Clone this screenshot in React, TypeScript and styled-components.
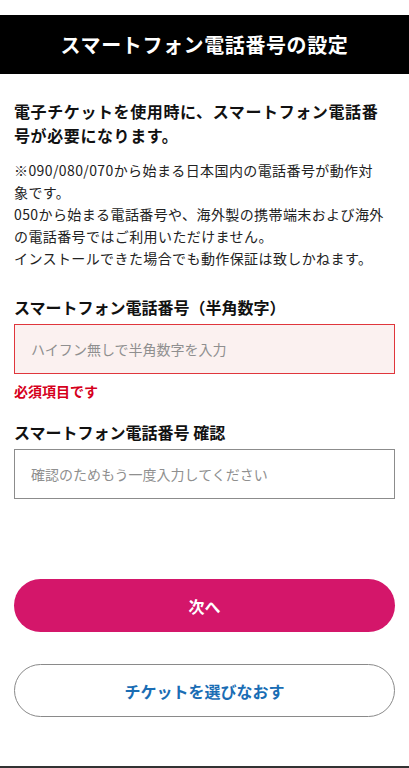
import React from 'react'
import styled, { createGlobalStyle } from 'styled-components'

const GlobalStyle = createGlobalStyle`
  html, body {
    margin: 0;
    padding: 0;
    background: #fff;
  }
  body {
    font-family: "Noto Sans CJK JP", "Noto Sans", sans-serif;
    color: #111;
  }
  * {
    box-sizing: border-box;
  }
`

const Page = styled.div`
  display: flex;
  flex-direction: column;
  min-height: 100vh;
  padding-top: 15px;
  border-bottom: 2px solid #333;
`

const Header = styled.header`
  display: flex;
  align-items: center;
  justify-content: center;
  height: 59px;
  background: #000;
`

const Title = styled.h1`
  margin: 0;
  color: #fff;
  font-size: 20px;
  font-weight: 700;
  letter-spacing: 0.6px;
`

const Content = styled.main`
  display: flex;
  flex-direction: column;
  padding: 25px 14px 0;
`

const Lead = styled.p`
  margin: 0;
  font-size: 16px;
  font-weight: 700;
  line-height: 24px;
  letter-spacing: 0.6px;
`

const Note = styled.p`
  margin: 12px 0 0;
  font-size: 14px;
  line-height: 22px;
  letter-spacing: 0.4px;
  color: #222;
`

const Field = styled.div<{ $gap: number }>`
  display: flex;
  flex-direction: column;
  margin-top: ${({ $gap }) => $gap}px;
`

const Label = styled.label`
  font-size: 16px;
  font-weight: 700;
  line-height: 24px;
  margin-bottom: 5px;
`

const Input = styled.input<{ $error?: boolean }>`
  width: 100%;
  height: 50px;
  padding: 0 16px;
  font-family: inherit;
  font-size: 14px;
  color: #111;
  border: 1px solid ${({ $error }) => ($error ? '#e0363c' : '#8c8c8c')};
  background: ${({ $error }) => ($error ? '#fbf1f0' : '#fff')};
  border-radius: 0;
  outline: none;

  &::placeholder {
    color: #8f8f8f;
  }
`

const ErrorText = styled.p`
  margin: 7px 0 0;
  font-size: 14px;
  font-weight: 700;
  line-height: 20px;
  color: #d6001c;
`

const Actions = styled.div`
  display: flex;
  flex-direction: column;
  gap: 32px;
  margin-top: 80px;
`

const Button = styled.button<{ $primary?: boolean }>`
  width: 100%;
  height: 53px;
  border-radius: 27px;
  font-family: inherit;
  font-size: 16px;
  font-weight: 700;
  cursor: pointer;
  border: ${({ $primary }) => ($primary ? 'none' : '1px solid #8a8a8a')};
  background: ${({ $primary }) => ($primary ? '#d4166a' : '#fff')};
  color: ${({ $primary }) => ($primary ? '#fff' : '#1a6db4')};
`

const App: React.FC = () => {
  return (
    <Page>
      <GlobalStyle />
      <Header>
        <Title>スマートフォン電話番号の設定</Title>
      </Header>
      <Content>
        <Lead>
          電子チケットを使用時に、スマートフォン電話番<br />号が必要になります。
        </Lead>
        <Note>
          ※090/080/070から始まる日本国内の電話番号が動作対<br />象です。<br />
          050から始まる電話番号や、海外製の携帯端末および海外<br />の電話番号ではご利用いただけません。<br />
          インストールできた場合でも動作保証は致しかねます。
        </Note>
        <Field $gap={26}>
          <Label htmlFor="tel">スマートフォン電話番号（半角数字）</Label>
          <Input id="tel" type="tel" $error placeholder="ハイフン無しで半角数字を入力" />
          <ErrorText>必須項目です</ErrorText>
        </Field>
        <Field $gap={19}>
          <Label htmlFor="tel-confirm">スマートフォン電話番号 確認</Label>
          <Input id="tel-confirm" type="tel" placeholder="確認のためもう一度入力してください" />
        </Field>
        <Actions>
          <Button $primary>次へ</Button>
          <Button>チケットを選びなおす</Button>
        </Actions>
      </Content>
    </Page>
  )
}

export default App
